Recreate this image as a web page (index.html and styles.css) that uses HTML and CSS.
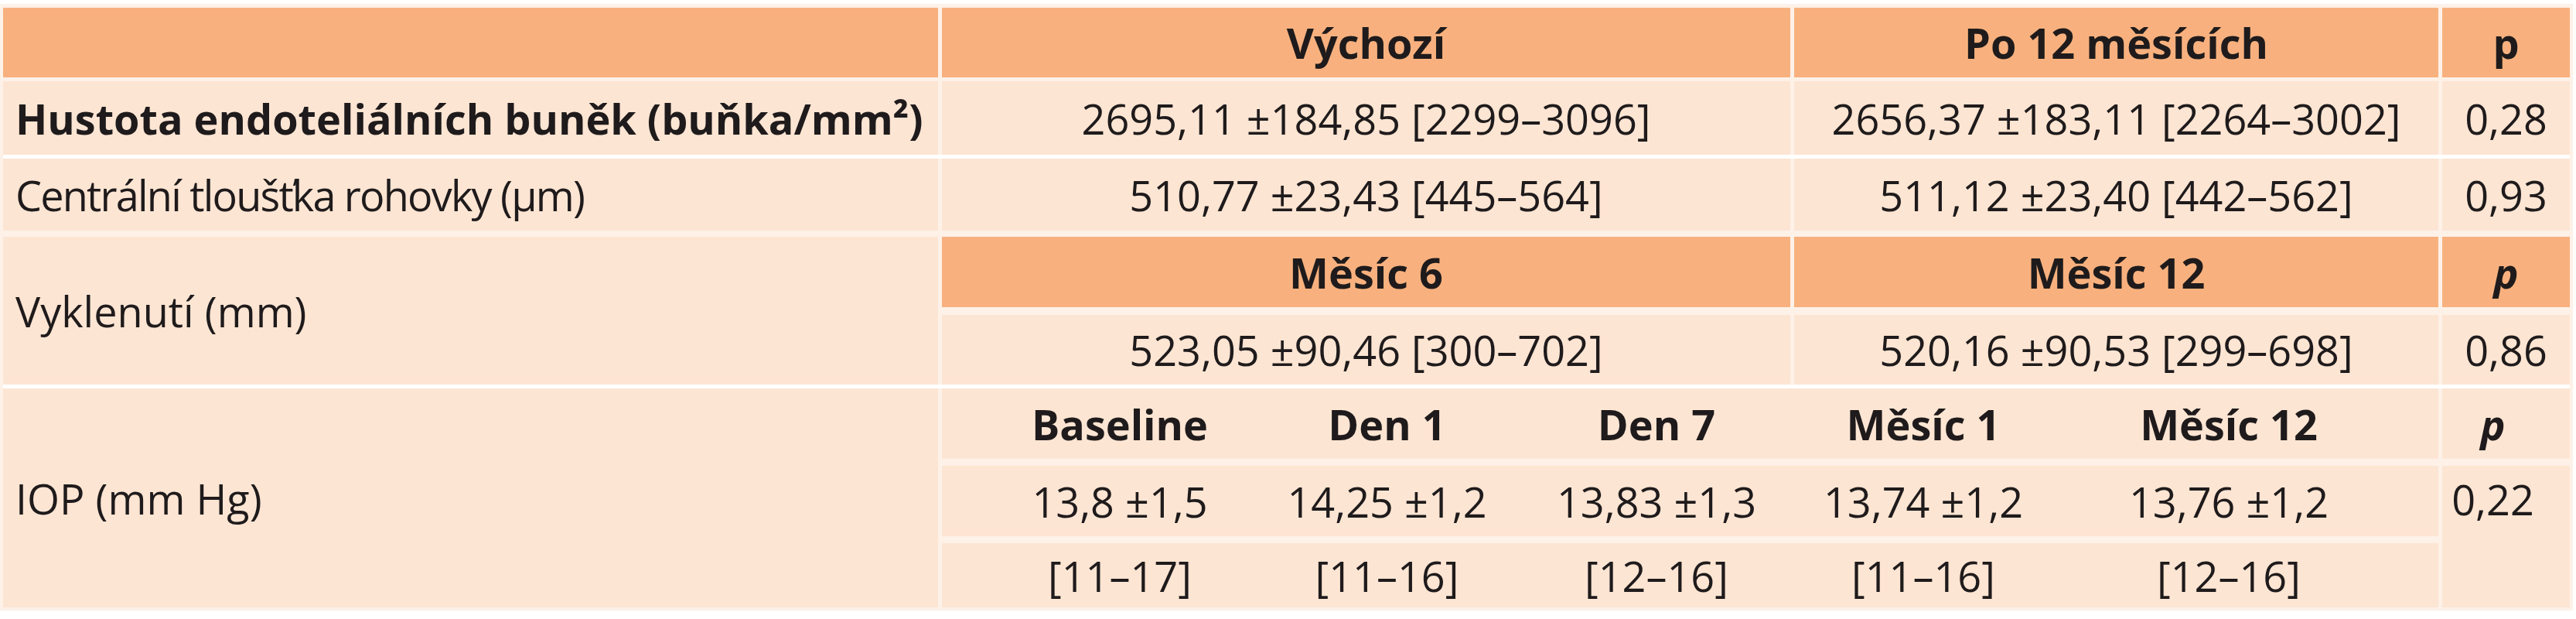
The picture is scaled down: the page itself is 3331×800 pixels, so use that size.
FILE: index.html
```html
<!DOCTYPE html>
<html lang="cs">
<head>
<meta charset="utf-8">
<title>Tabulka</title>
<link rel="stylesheet" href="styles.css">
</head>
<body>
<div class="tbl">
  <div class="row row-head">
    <div class="cell head"></div>
    <div class="cell head">Výchozí</div>
    <div class="cell head">Po 12 měsících</div>
    <div class="cell head">p</div>
  </div>
  <div class="row row-1">
    <div class="cell label strong">Hustota endoteliálních buněk (buňka/mm²)</div>
    <div class="cell">2695,11 ±184,85 [2299–3096]</div>
    <div class="cell">2656,37 ±183,11 [2264–3002]</div>
    <div class="cell">0,28</div>
  </div>
  <div class="row row-2">
    <div class="cell label tight">Centrální tloušťka rohovky (µm)</div>
    <div class="cell">510,77 ±23,43 [445–564]</div>
    <div class="cell">511,12 ±23,40 [442–562]</div>
    <div class="cell">0,93</div>
  </div>
  <div class="section vyk">
    <div class="cell label span-a2">Vyklenutí (mm)</div>
    <div class="cell head">Měsíc 6</div>
    <div class="cell head">Měsíc 12</div>
    <div class="cell head"><em>p</em></div>
    <div class="cell">523,05 ±90,46 [300–702]</div>
    <div class="cell">520,16 ±90,53 [299–698]</div>
    <div class="cell">0,86</div>
  </div>
  <div class="section iop">
    <div class="cell label span-a3">IOP (mm Hg)</div>
    <div class="cell sub sub-1">
      <div class="subcell strong">Baseline</div>
      <div class="subcell strong">Den 1</div>
      <div class="subcell strong">Den 7</div>
      <div class="subcell strong">Měsíc 1</div>
      <div class="subcell strong">Měsíc 12</div>
    </div>
    <div class="cell pcell phead strong"><em>p</em></div>
    <div class="cell sub sub-2">
      <div class="subcell">13,8 ±1,5</div>
      <div class="subcell">14,25 ±1,2</div>
      <div class="subcell">13,83 ±1,3</div>
      <div class="subcell">13,74 ±1,2</div>
      <div class="subcell">13,76 ±1,2</div>
    </div>
    <div class="cell pcell pval">0,22</div>
    <div class="cell sub sub-3">
      <div class="subcell">[11–17]</div>
      <div class="subcell">[11–16]</div>
      <div class="subcell">[12–16]</div>
      <div class="subcell">[11–16]</div>
      <div class="subcell">[12–16]</div>
    </div>
  </div>
</div>
</body>
</html>
```

FILE: styles.css
```css
html, body {
  margin: 0;
  padding: 0;
  background: #ffffff;
}

body {
  font-family: "Open Sans", "Noto Sans", "Liberation Sans", sans-serif;
  font-size: 54px;
  color: #1f1b1c;
}

.tbl {
  margin-top: 5px;
  padding: 5px 4px 4px 4px;
  width: 3319px;
  background: #fdf1e8;
  display: flex;
  flex-direction: column;
}

.row,
.section {
  display: grid;
  grid-template-columns: 1209px 1097px 833px 165px;
  column-gap: 5px;
}

.row-head { grid-template-rows: 90px; }
.row-1 { grid-template-rows: 95px; margin-top: 5px; }
.row-2 { grid-template-rows: 93px; border-top: 5px solid #ffffff; }

.vyk {
  margin-top: 8px;
  grid-template-rows: 91px 90px;
  row-gap: 10px;
}

.iop {
  border-top: 5px solid #ffffff;
  grid-template-columns: 1209px 1935px 165px;
  grid-template-rows: 91px 91px 83px;
  row-gap: 9px;
}

.cell {
  background: #fde5d3;
  display: flex;
  align-items: center;
  justify-content: center;
  line-height: 60px;
  white-space: nowrap;
}

.cell.head {
  background: #f8b17e;
  font-weight: 700;
}

.cell.label {
  justify-content: flex-start;
  padding-left: 16px;
}

.cell.tight {
  letter-spacing: -1.8px;
}

.strong { font-weight: 700; }

.span-a2 { grid-row: 1 / 3; grid-column: 1; }
.span-a3 { grid-row: 1 / 4; grid-column: 1; }

.sub {
  display: grid;
  grid-template-columns: 342px 349px 348px 342px 448px;
  padding: 0 47px 0 59px;
  grid-column: 2;
}

.sub-1 { grid-row: 1; }
.sub-2 { grid-row: 2; }
.sub-3 { grid-row: 3; }

.subcell {
  display: flex;
  align-items: center;
  justify-content: center;
}

.pcell {
  grid-column: 3;
  padding-right: 34px;
}

.phead { grid-row: 1; }

.pval {
  grid-row: 2 / 4;
  align-items: flex-start;
  padding-top: 13px;
}

em { font-style: italic; }
```
